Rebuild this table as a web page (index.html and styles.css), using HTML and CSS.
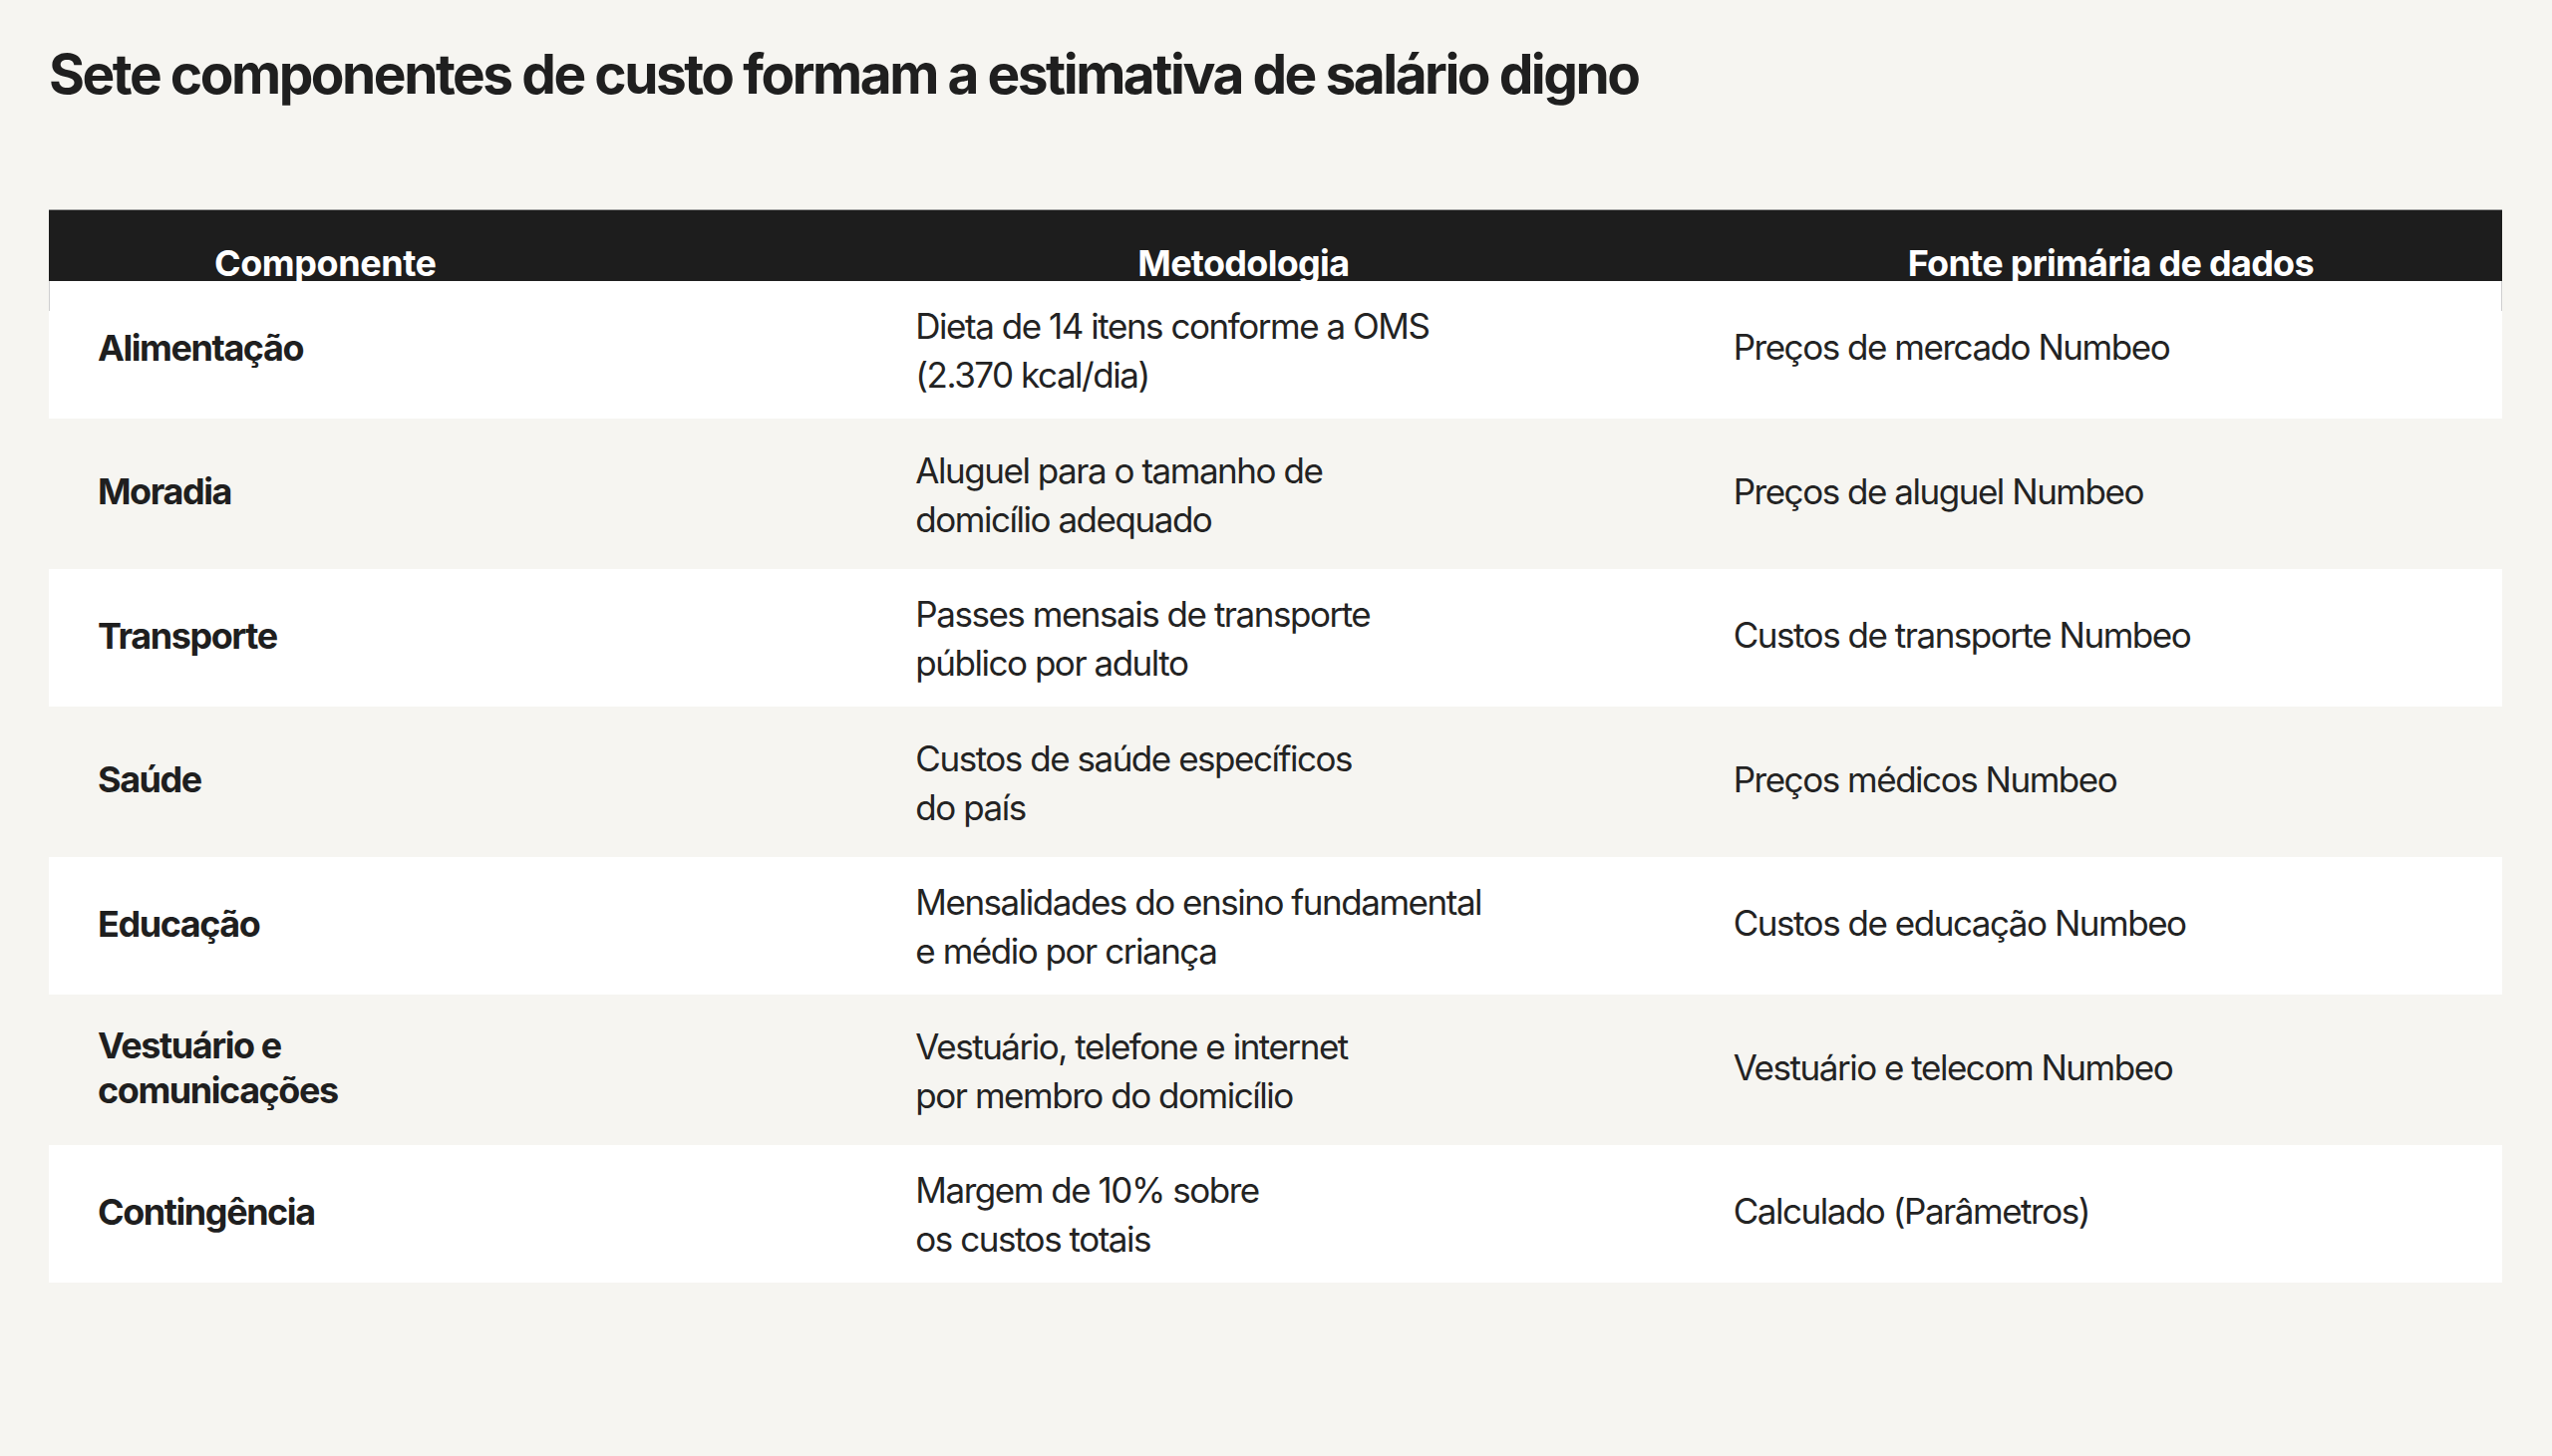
FILE: index.html
```html
<!DOCTYPE html>
<html lang="pt-BR">
<head>
<meta charset="utf-8">
<title>Sete componentes de custo</title>
<link rel="stylesheet" href="styles.css">
</head>
<body>
<main class="page">
  <h1 class="title">Sete componentes de custo formam a estimativa de salário digno</h1>
  <section class="table">
    <div class="thead">
      <div class="th th-1">Componente</div>
      <div class="th th-2">Metodologia</div>
      <div class="th th-3">Fonte primária de dados</div>
    </div>
    <div class="row row-white row-first">
      <div class="cell name">Alimentação</div>
      <div class="cell method">Dieta de 14 itens conforme a OMS<br>(2.370 kcal/dia)</div>
      <div class="cell source">Preços de mercado Numbeo</div>
    </div>
    <div class="row row-grey">
      <div class="cell name">Moradia</div>
      <div class="cell method">Aluguel para o tamanho de<br>domicílio adequado</div>
      <div class="cell source">Preços de aluguel Numbeo</div>
    </div>
    <div class="row row-white">
      <div class="cell name">Transporte</div>
      <div class="cell method">Passes mensais de transporte<br>público por adulto</div>
      <div class="cell source">Custos de transporte Numbeo</div>
    </div>
    <div class="row row-grey">
      <div class="cell name">Saúde</div>
      <div class="cell method">Custos de saúde específicos<br>do país</div>
      <div class="cell source">Preços médicos Numbeo</div>
    </div>
    <div class="row row-white">
      <div class="cell name">Educação</div>
      <div class="cell method">Mensalidades do ensino fundamental<br>e médio por criança</div>
      <div class="cell source">Custos de educação Numbeo</div>
    </div>
    <div class="row row-grey">
      <div class="cell name">Vestuário e<br>comunicações</div>
      <div class="cell method">Vestuário, telefone e internet<br>por membro do domicílio</div>
      <div class="cell source">Vestuário e telecom Numbeo</div>
    </div>
    <div class="row row-white">
      <div class="cell name">Contingência</div>
      <div class="cell method">Margem de 10% sobre<br>os custos totais</div>
      <div class="cell source">Calculado (Parâmetros)</div>
    </div>
  </section>
</main>
</body>
</html>
```

FILE: styles.css
```css
* { box-sizing: border-box; }

html, body {
  margin: 0;
  padding: 0;
  background: #f6f5f1;
}

body {
  font-family: "Inter", "Liberation Sans", sans-serif;
  color: #1f1f1f;
}

.page {
  padding: 0 50px 0 49px;
}

.title {
  margin: 41px 0 103px;
  font-size: 55px;
  line-height: 66px;
  font-weight: 700;
  letter-spacing: -0.045em;
  color: #1f1f1f;
}

.table {
  display: flex;
  flex-direction: column;
}

.thead {
  display: grid;
  grid-template-columns: 1fr 1fr 1fr;
  height: 72px;
  background: #1d1d1d;
  border-top: 1px solid #9a9a9a;
  overflow: hidden;
}

.th {
  color: #ffffff;
  font-size: 36px;
  font-weight: 700;
  letter-spacing: -0.02em;
  line-height: 44px;
  padding-top: 31px;
  white-space: nowrap;
}

.th-1 { padding-left: 166px; letter-spacing: -0.012em; }
.th-2 { padding-left: 272px; }
.th-3 { padding-left: 224px; }

.row {
  display: grid;
  grid-template-columns: 1fr 1fr 1fr;
  align-items: center;
}

.row-white {
  background: #ffffff;
  padding: 20px 0 19px;
}

.row-grey {
  background: #f6f5f1;
  padding: 26.5px 0 25.5px;
}

.row-first {
  background:
    linear-gradient(#cfcfcf, #cfcfcf) left top / 1px 30px no-repeat,
    linear-gradient(#cfcfcf, #cfcfcf) right top / 1px 30px no-repeat,
    #ffffff;
}

.cell {
  padding-left: 49px;
  font-size: 35px;
  line-height: 49px;
  font-weight: 400;
  letter-spacing: -0.042em;
  color: #232323;
}

.cell.method {
  padding-top: 1px;
}

.cell.source {
  padding-bottom: 6px;
}

.cell.name {
  padding-left: 49px;
  padding-bottom: 5px;
  font-size: 36px;
  font-weight: 700;
  line-height: 45px;
  letter-spacing: -0.04em;
  color: #1f1f1f;
}
```
